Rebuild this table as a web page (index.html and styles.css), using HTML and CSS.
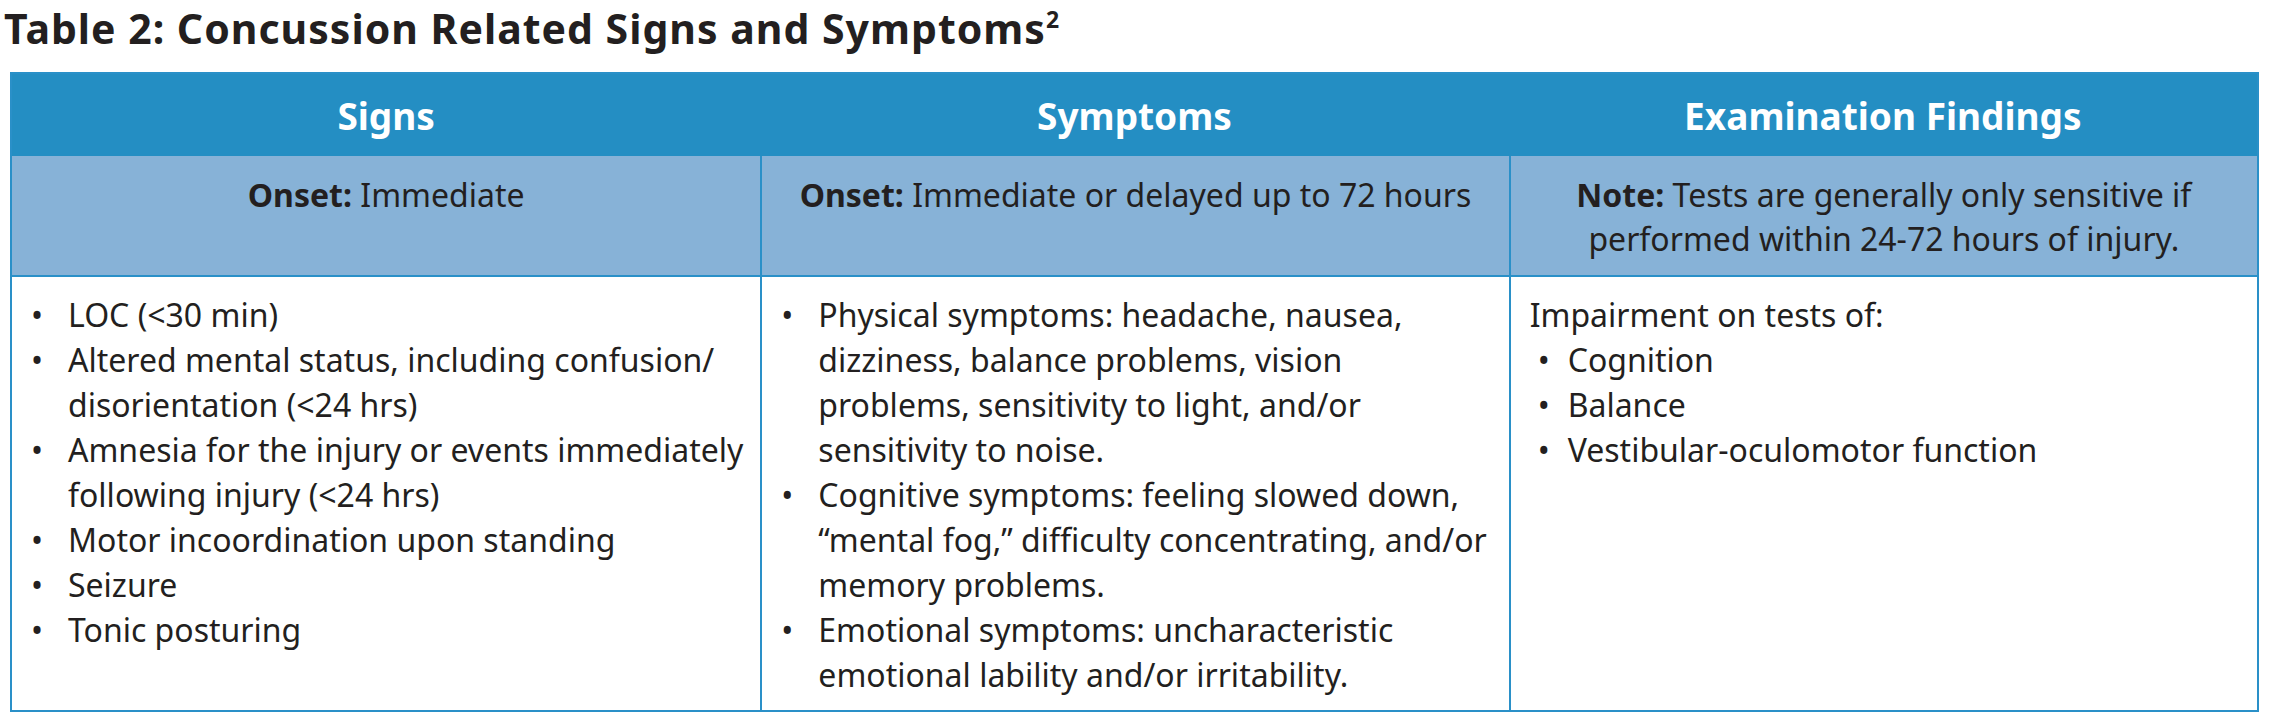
FILE: index.html
```html
<!DOCTYPE html>
<html lang="en">
<head>
<meta charset="utf-8">
<title>Table 2: Concussion Related Signs and Symptoms</title>
<link rel="stylesheet" href="styles.css">
</head>
<body>
<h1 class="title">Table 2: Concussion Related Signs and Symptoms<sup class="ref">2</sup></h1>
<div class="tbl">
  <div class="hd">Signs</div>
  <div class="hd">Symptoms</div>
  <div class="hd">Examination Findings</div>

  <div class="sub"><b>Onset:</b> Immediate</div>
  <div class="sub sep"><b>Onset:</b> Immediate or delayed up to 72 hours</div>
  <div class="sub sep"><b>Note:</b> Tests are generally only sensitive if performed within 24-72 hours of injury.</div>

  <div class="cell">
    <ul class="list">
      <li>LOC (&lt;30 min)</li>
      <li>Altered mental status, including confusion/ disorientation (&lt;24 hrs)</li>
      <li>Amnesia for the injury or events immediately following injury (&lt;24 hrs)</li>
      <li>Motor incoordination upon standing</li>
      <li>Seizure</li>
      <li>Tonic posturing</li>
    </ul>
  </div>
  <div class="cell sep">
    <ul class="list">
      <li>Physical symptoms: headache, nausea, dizziness, balance problems, vision problems, sensitivity to light, and/or sensitivity to noise.</li>
      <li>Cognitive symptoms: feeling slowed down, “mental fog,” difficulty concentrating, and/or memory problems.</li>
      <li>Emotional symptoms: uncharacteristic emotional lability and/or irritability.</li>
    </ul>
  </div>
  <div class="cell sep cell-exam">
    <p class="lead">Impairment on tests of:</p>
    <ul class="list list-exam">
      <li>Cognition</li>
      <li>Balance</li>
      <li>Vestibular-oculomotor function</li>
    </ul>
  </div>
</div>
</body>
</html>
```

FILE: styles.css
```css
html, body {
  margin: 0;
  padding: 0;
  background: #ffffff;
}

body {
  font-family: "Noto Sans", "Open Sans", "Liberation Sans", sans-serif;
  color: #231f20;
  padding: 0 10px 0 10px;
}

.title {
  margin: 0 0 0 -6px;
  padding: 0;
  font-size: 41px;
  line-height: 56px;
  font-weight: 700;
  letter-spacing: 1px;
  color: #231f20;
}

.ref {
  font-size: 23px;
  line-height: 0;
  vertical-align: 16px;
  letter-spacing: 0;
}

.tbl {
  margin-top: 16px;
  width: 2245px;
  border: 2px solid #2a90c8;
  display: grid;
  grid-template-columns: 1fr 1fr 1fr;
}

.hd {
  background: #248ec3;
  color: #ffffff;
  font-weight: 700;
  font-size: 37px;
  height: 82px;
  display: flex;
  align-items: center;
  justify-content: center;
}

.sub {
  background: #87b2d7;
  border-bottom: 2px solid #2a90c8;
  height: 102px;
  padding: 17px 16px 0 16px;
  font-size: 32px;
  line-height: 44px;
  text-align: center;
  color: #231f20;
}

.sub b {
  font-weight: 700;
}

.sep {
  border-left: 2px solid #2a90c8;
}

.cell {
  height: 418px;
  padding: 15px 8px 0 0;
  font-size: 32px;
  line-height: 45px;
  color: #231f20;
}

.list {
  list-style: none;
  margin: 0;
  padding: 0 0 0 56px;
}

.list li {
  position: relative;
}

.list li::before {
  content: "•";
  position: absolute;
  left: -37px;
  top: 0;
}

.cell-exam {
  padding-left: 19px;
}

.lead {
  margin: 0;
}

.list-exam {
  padding-left: 38px;
}

.list-exam li::before {
  left: -30px;
}
```
